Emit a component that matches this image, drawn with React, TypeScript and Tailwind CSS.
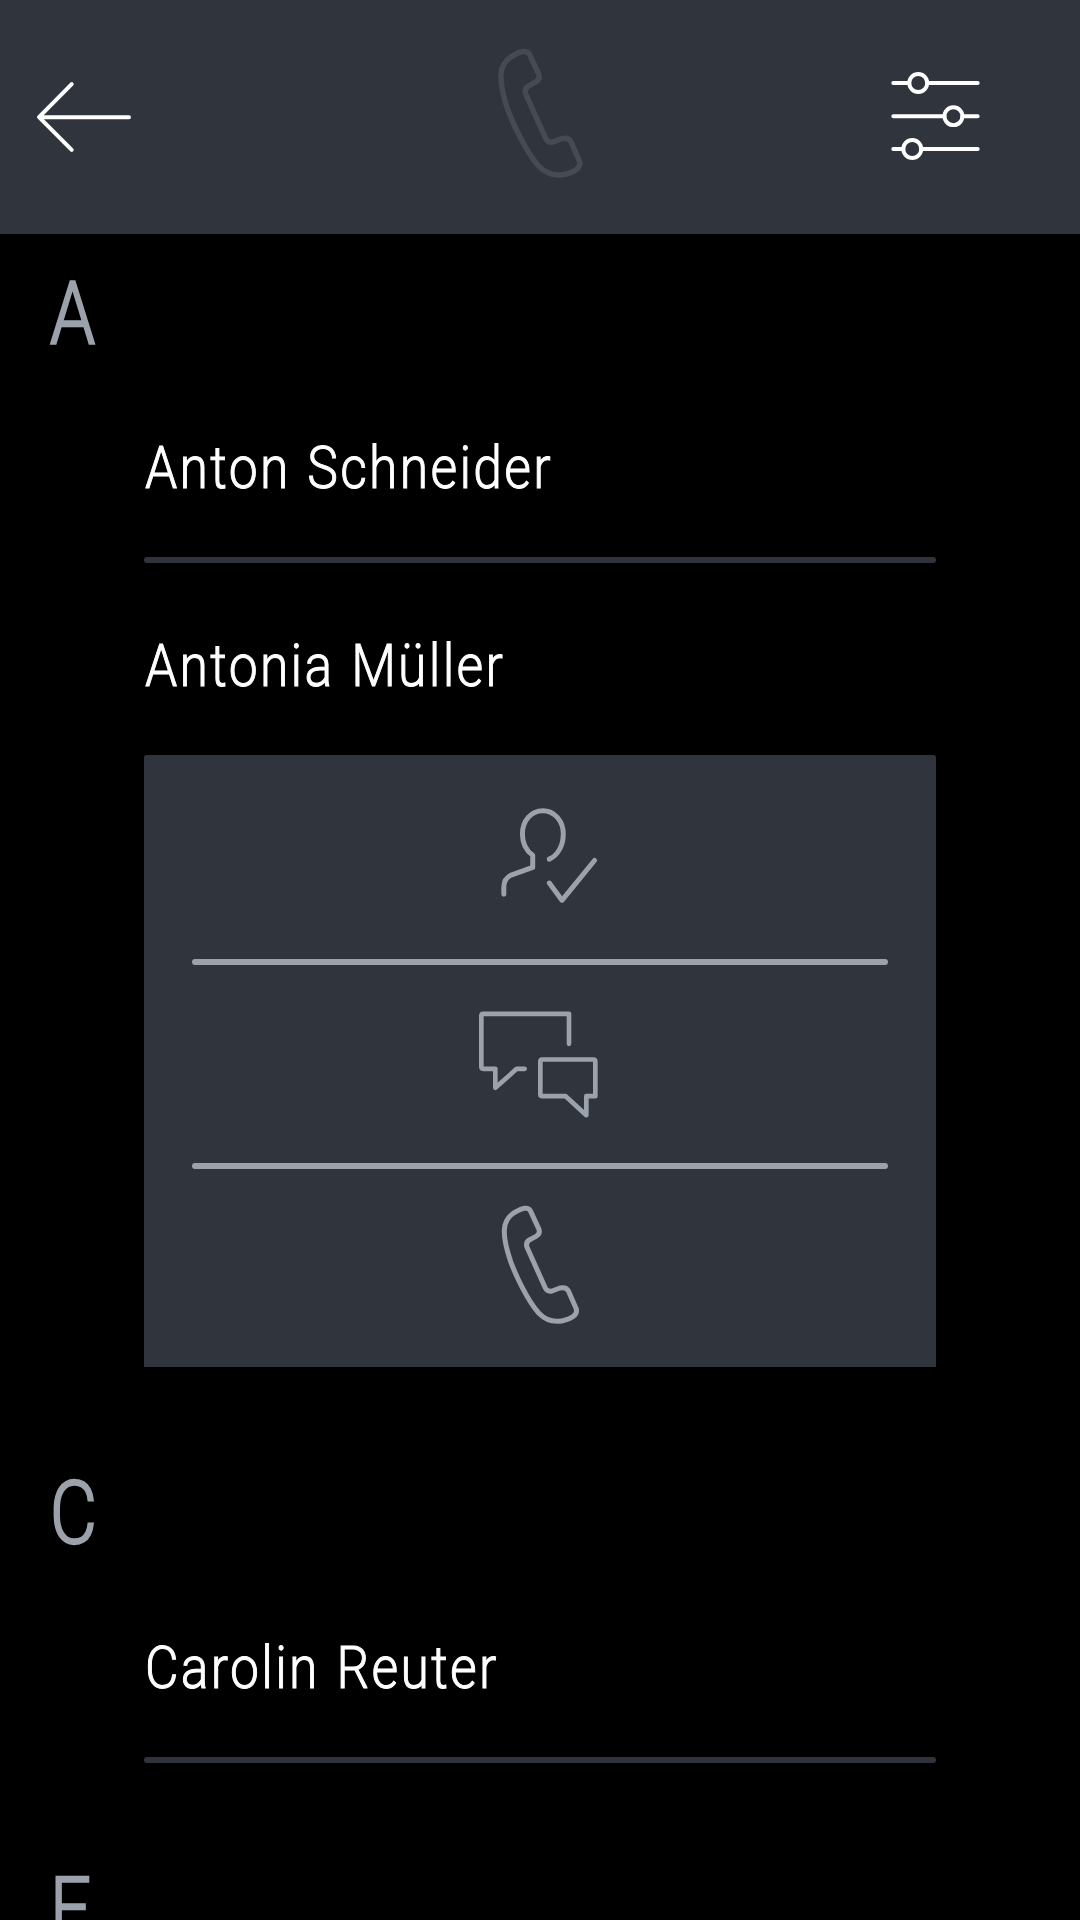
import type { ReactNode } from "react";

type IconProps = { className?: string };

function Icon({
  viewBox,
  strokeWidth,
  className = "",
  children,
}: {
  viewBox: string;
  strokeWidth: number;
  className?: string;
  children: ReactNode;
}) {
  return (
    <svg
      viewBox={viewBox}
      fill="none"
      stroke="currentColor"
      strokeWidth={strokeWidth}
      strokeLinecap="round"
      strokeLinejoin="round"
      className={`block overflow-visible ${className}`}
    >
      {children}
    </svg>
  );
}

function BackIcon({ className }: IconProps) {
  return (
    <Icon viewBox="52 67 279 207" strokeWidth={12} className={className}>
      <path d="M325 171H60M155 73L58 171L155 268" />
    </Icon>
  );
}

function PhoneIcon({ className }: IconProps) {
  return (
    <Icon viewBox="66 48 231 354" strokeWidth={15} className={className}>
      <path d="M133 55Q146 53 151 62L177 118Q181 132 168 139L149 149Q136 156 141 172L196 294Q202 306 216 303L240 294Q258 290 265 302L289 357Q292 370 280 379Q258 393 233 394Q201 395 176 369C140 328 105 250 92 215C80 180 72 150 73 120C74 92 90 74 110 64Q122 57 133 55Z" />
    </Icon>
  );
}

function SettingsIcon({ className }: IconProps) {
  return (
    <Icon viewBox="65 66 266 265" strokeWidth={12} className={className}>
      <path d="M71 99H119M173 99H325M71 199H225M279 199H325M71 298H101M155 298H325" />
      <circle cx="146" cy="99" r="27" />
      <circle cx="252" cy="199" r="27" />
      <circle cx="128" cy="298" r="27" />
    </Icon>
  );
}

function PresenceIcon({ className }: IconProps) {
  return (
    <Icon viewBox="62 54 288 286" strokeWidth={15} className={className}>
      <path d="M70 314V292Q70 266 92 256L157 233V196C140 184 126 162 126 132C126 92 152 62 187 62C222 62 249 92 249 132C249 168 232 197 207 208" />
      <path d="M207 280L245 332L343 212" />
    </Icon>
  );
}

function ChatIcon({ className }: IconProps) {
  return (
    <Icon viewBox="57 63 357 320" strokeWidth={14} className={className}>
      <path d="M327 161V71H70Q64 71 64 77V230Q64 236 70 236H106V293L170 236H194" />
      <path d="M247 208H400Q406 208 406 214V318H379V375L317 318H247Q241 318 241 312V214Q241 208 247 208Z" />
    </Icon>
  );
}

function ContactActions() {
  return (
    <div className="flex h-[612px] flex-col items-center rounded-t-[3px] bg-[#30343c] text-[#9ba2ab]">
      <button className="flex h-[204px] w-full justify-center pt-[53px] pl-[17px]">
        <PresenceIcon className="h-[95px] w-[96px]" />
      </button>
      <div className="h-1.5 w-[696px] shrink-0 rounded-full bg-[#9ba2ab]" />
      <button className="flex h-[198px] w-full justify-center pt-[46px] pr-[3px]">
        <ChatIcon className="h-[107px] w-[119px]" />
      </button>
      <div className="h-1.5 w-[696px] shrink-0 rounded-full bg-[#9ba2ab]" />
      <button className="flex flex-1 justify-center pt-[37px]">
        <PhoneIcon className="h-[118px] w-[77px]" />
      </button>
    </div>
  );
}

function Contact({ name, open = false }: { name: string; open?: boolean }) {
  return (
    <li>
      <div className="flex h-48 items-center whitespace-nowrap pt-[13px]">
        <span className="ml-px origin-left scale-x-[0.86] text-[60px] leading-none font-light tracking-[2.7px] text-white [-webkit-text-stroke:1px_currentColor] [word-spacing:2px]">
          {name}
        </span>
      </div>
      {open ? <ContactActions /> : <div className="h-1.5 rounded-full bg-[#30333b]" />}
    </li>
  );
}

const groups = [
  { letter: "A", contacts: [{ name: "Anton Schneider" }, { name: "Antonia Müller", open: true }] },
  { letter: "C", contacts: [{ name: "Carolin Reuter" }] },
  { letter: "E", contacts: [] },
];

export default function App() {
  return (
    <div className="flex h-[1920px] w-[1080px] flex-col overflow-hidden bg-black font-['Roboto','Liberation_Sans',sans-serif]">
      <header className="grid h-[234px] shrink-0 grid-cols-3 bg-[#30343c] text-white">
        <button className="flex pt-[82px] pl-[37px]">
          <BackIcon className="h-[70px] w-[94px]" />
        </button>
        <div className="flex justify-center pt-[49px] text-[#464a53]">
          <PhoneIcon className="h-[129px] w-[85px]" />
        </div>
        <button className="flex justify-end pt-[72px] pr-[100px]">
          <SettingsIcon className="h-[88px] w-[89px]" />
        </button>
      </header>
      <main className="pt-[25px]">
        {groups.map((group) => (
          <section key={group.letter} className="mb-[92px]">
            <h2 className="h-[106px] pt-px pl-[50px] text-[87px] leading-[106px] font-light text-[#9ba2ab]">
              <span className="inline-block origin-left scale-x-[0.83] [-webkit-text-stroke:2.4px_currentColor]">
                {group.letter}
              </span>
            </h2>
            <ul className="mx-36">
              {group.contacts.map((contact) => (
                <Contact key={contact.name} {...contact} />
              ))}
            </ul>
          </section>
        ))}
      </main>
    </div>
  );
}
